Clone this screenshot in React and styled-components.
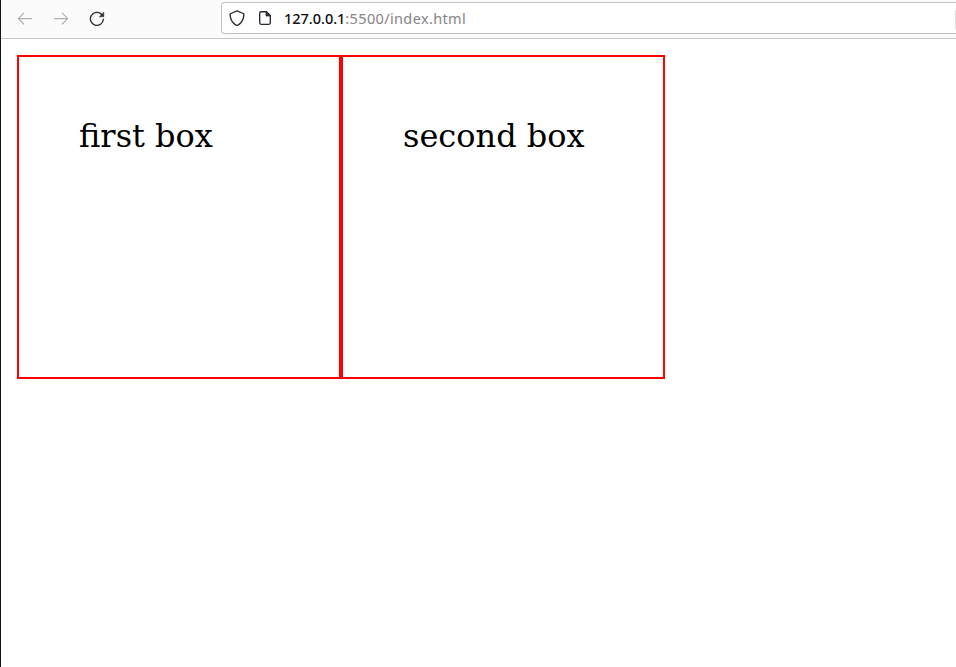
import React from "react";
import styled, { createGlobalStyle } from "styled-components";

const GlobalStyle = createGlobalStyle`
  * { box-sizing: border-box; }
  body { margin: 0; background: #fff; overflow: hidden; }
`;

const Window = styled.div`
  height: 667px;
  display: flex;
  flex-direction: column;
  border-left: 1px solid #1c0f18;
  background: #fff;
`;

const Toolbar = styled.header`
  height: 39px;
  flex: none;
  display: flex;
  align-items: flex-start;
  padding-top: 2px;
  background: #fbfbfb;
  border-bottom: 1px solid #c8c8c8;
`;

const Navigation = styled.nav`
  width: 220px;
  flex: none;
  display: flex;
  gap: 20px;
  padding: 9px 0 0 16px;
`;

const Icon = styled.svg`
  display: block;
  flex: none;
  width: 16px;
  height: 16px;
  fill: none;
  stroke: ${({ $muted }) => ($muted ? "#b0b0b0" : "#2b2a33")};
  stroke-width: ${({ $muted }) => ($muted ? 1.2 : 1.35)};
  stroke-linecap: round;
  stroke-linejoin: round;
`;

const AddressBar = styled.div`
  flex: 1;
  height: 32px;
  display: flex;
  align-items: center;
  padding-left: 7px;
  border: 1px solid #c2c2c2;
  border-right: 0;
  border-radius: 4px 0 0 4px;
  background: #fff;
`;

const AddressIcons = styled.div`
  display: flex;
  gap: 12px;
  margin-right: 11px;
`;

const Address = styled.div`
  flex: 1;
  font: 14.5px/20px "Noto Sans", sans-serif;
  letter-spacing: 0.36px;
  color: #858585;
  white-space: nowrap;
`;

const Host = styled.span`
  color: #0c0c0d;
  font-weight: 500;
  letter-spacing: -0.03px;
`;

const ButtonEdge = styled.span`
  width: 1px;
  height: 19px;
  margin-top: 2px;
  background: #dedede;
`;

const Page = styled.main`
  display: flex;
  padding: 16px;
`;

const Box = styled.section`
  width: 324px;
  height: 324px;
  padding: 60px;
  border: 2px solid #f00;
  color: #000;
  font: 32px/38px "DejaVu Serif", serif;
  white-space: nowrap;
`;

export default function App() {
  return (
    <>
      <GlobalStyle />
      <Window>
        <Toolbar>
          <Navigation>
            <Icon $muted viewBox="0 0 16 16">
              <path d="M14.5 7.6H1.3M6.7 2.2 1.3 7.6l5.4 5.4" />
            </Icon>
            <Icon $muted viewBox="0 0 16 16">
              <path d="M1.5 7.6h13.2M9.3 2.2l5.4 5.4-5.4 5.4" />
            </Icon>
            <Icon viewBox="0 0 16 16">
              <path d="M12.7 3.5A6.5 6.5 0 1 0 14.4 8.3" />
              <path d="M14.8 1.5v4.3h-4.3z" fill="#2b2a33" strokeWidth=".5" />
            </Icon>
          </Navigation>
          <AddressBar>
            <AddressIcons>
              <Icon viewBox="0 0 16 16">
                <path d="M8 .9 14.1 3.5c.5.2.8.6.8 1.1-.2 4.4-2.1 8.4-6.3 10.7a1.2 1.2 0 0 1-1.2 0C3.2 13 1.3 9 1.1 4.6c0-.5.3-.9.8-1.1z" />
              </Icon>
              <Icon viewBox="0 0 16 16">
                <path d="M9.5 1.7H4.2a1.5 1.5 0 0 0-1.5 1.5v9.6a1.5 1.5 0 0 0 1.5 1.5h7.6a1.5 1.5 0 0 0 1.5-1.5V5.5z" />
                <path d="M9 1.7v4.3h4.3z" fill="#2b2a33" strokeWidth=".8" />
              </Icon>
            </AddressIcons>
            <Address>
              <Host>127.0.0.1</Host>:5500/index.html
            </Address>
            <ButtonEdge />
          </AddressBar>
        </Toolbar>
        <Page>
          <Box>first box</Box>
          <Box>second box</Box>
        </Page>
      </Window>
    </>
  );
}
